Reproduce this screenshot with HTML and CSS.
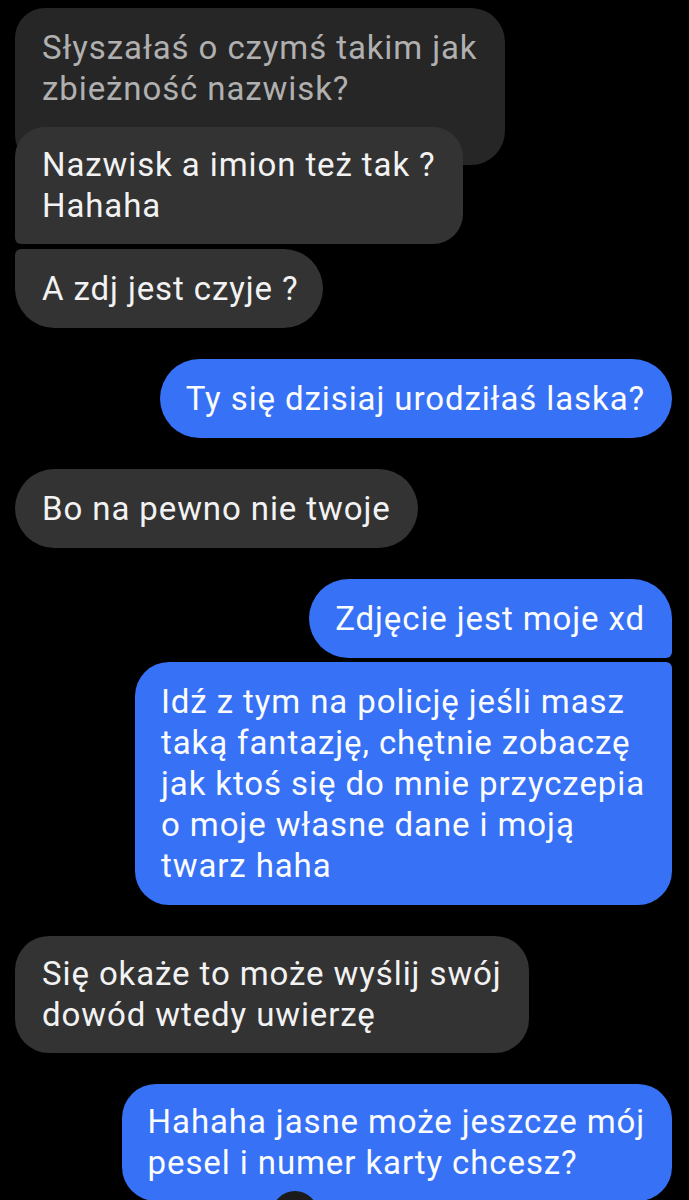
FILE: index.html
```html
<!DOCTYPE html>
<html lang="pl">
<head>
<meta charset="utf-8">
<title>Czat</title>
<link rel="stylesheet" href="styles.css">
</head>
<body>
<main class="chat">
  <div class="group group-in">
    <div class="bubble in quoted">Słyszałaś o czymś takim jak<br>zbieżność nazwisk?</div>
    <div class="bubble in reply two first">Nazwisk a imion też tak ?<br>Hahaha</div>
    <div class="bubble in last">A zdj jest czyje ?</div>
  </div>

  <div class="group group-out">
    <div class="bubble out">Ty się dzisiaj urodziłaś laska?</div>
  </div>

  <div class="group group-in">
    <div class="bubble in">Bo na pewno nie twoje</div>
  </div>

  <div class="group group-out">
    <div class="bubble out first">Zdjęcie jest moje xd</div>
    <div class="bubble out last">Idź z tym na policję jeśli masz<br>taką fantazję, chętnie zobaczę<br>jak ktoś się do mnie przyczepia<br>o moje własne dane i moją<br>twarz haha</div>
  </div>

  <div class="group group-in">
    <div class="bubble in two">Się okaże to może wyślij swój<br>dowód wtedy uwierzę</div>
  </div>

  <div class="group group-out">
    <div class="bubble out two">Hahaha jasne może jeszcze mój<br>pesel i numer karty chcesz?<span class="avatar"></span></div>
  </div>
</main>
</body>
</html>
```

FILE: styles.css
```css
* {
  box-sizing: border-box;
}

html, body {
  margin: 0;
  padding: 0;
  background: #000;
  overflow: hidden;
}

.chat {
  display: flex;
  flex-direction: column;
  gap: 31px;
  padding: 8px 17px 0 15px;
  font-family: Roboto, "Noto Sans", sans-serif;
  font-size: 33px;
  letter-spacing: 0.9px;
  line-height: 41px;
  color: #f2f2f2;
}

.group {
  display: flex;
  flex-direction: column;
  gap: 5px;
}

.group-in {
  align-items: flex-start;
}

.group-out {
  align-items: flex-end;
  gap: 4px;
}

.bubble {
  position: relative;
  white-space: nowrap;
  padding: 19px 27px;
  border-radius: 40px;
}

.bubble.two {
  padding-top: 17px;
  padding-bottom: 18px;
  border-radius: 34px;
}

.bubble.in {
  background: #333333;
}

.bubble.in.last {
  padding-right: 24px;
}

.bubble.out {
  background: #3671f6;
  color: #fbfcff;
  padding-left: 26px;
  padding-right: 27px;
}

.bubble.quoted {
  background: #262626;
  color: #b0b0b0;
  padding-bottom: 56px;
  border-radius: 30px 34px 34px 30px;
}

.bubble.reply {
  margin-top: -43px;
  z-index: 1;
  border-radius: 30px;
}

.group-in .bubble.first {
  border-bottom-left-radius: 6px;
}

.group-in .bubble.last {
  border-top-left-radius: 6px;
}

.group-out .bubble.first {
  border-bottom-right-radius: 6px;
}

.group-out .bubble.last {
  border-radius: 34px 6px 34px 34px;
}

.avatar {
  position: absolute;
  left: 150px;
  top: 107px;
  width: 46px;
  height: 46px;
  border-radius: 50%;
  background: #1b1b1b;
}
```
